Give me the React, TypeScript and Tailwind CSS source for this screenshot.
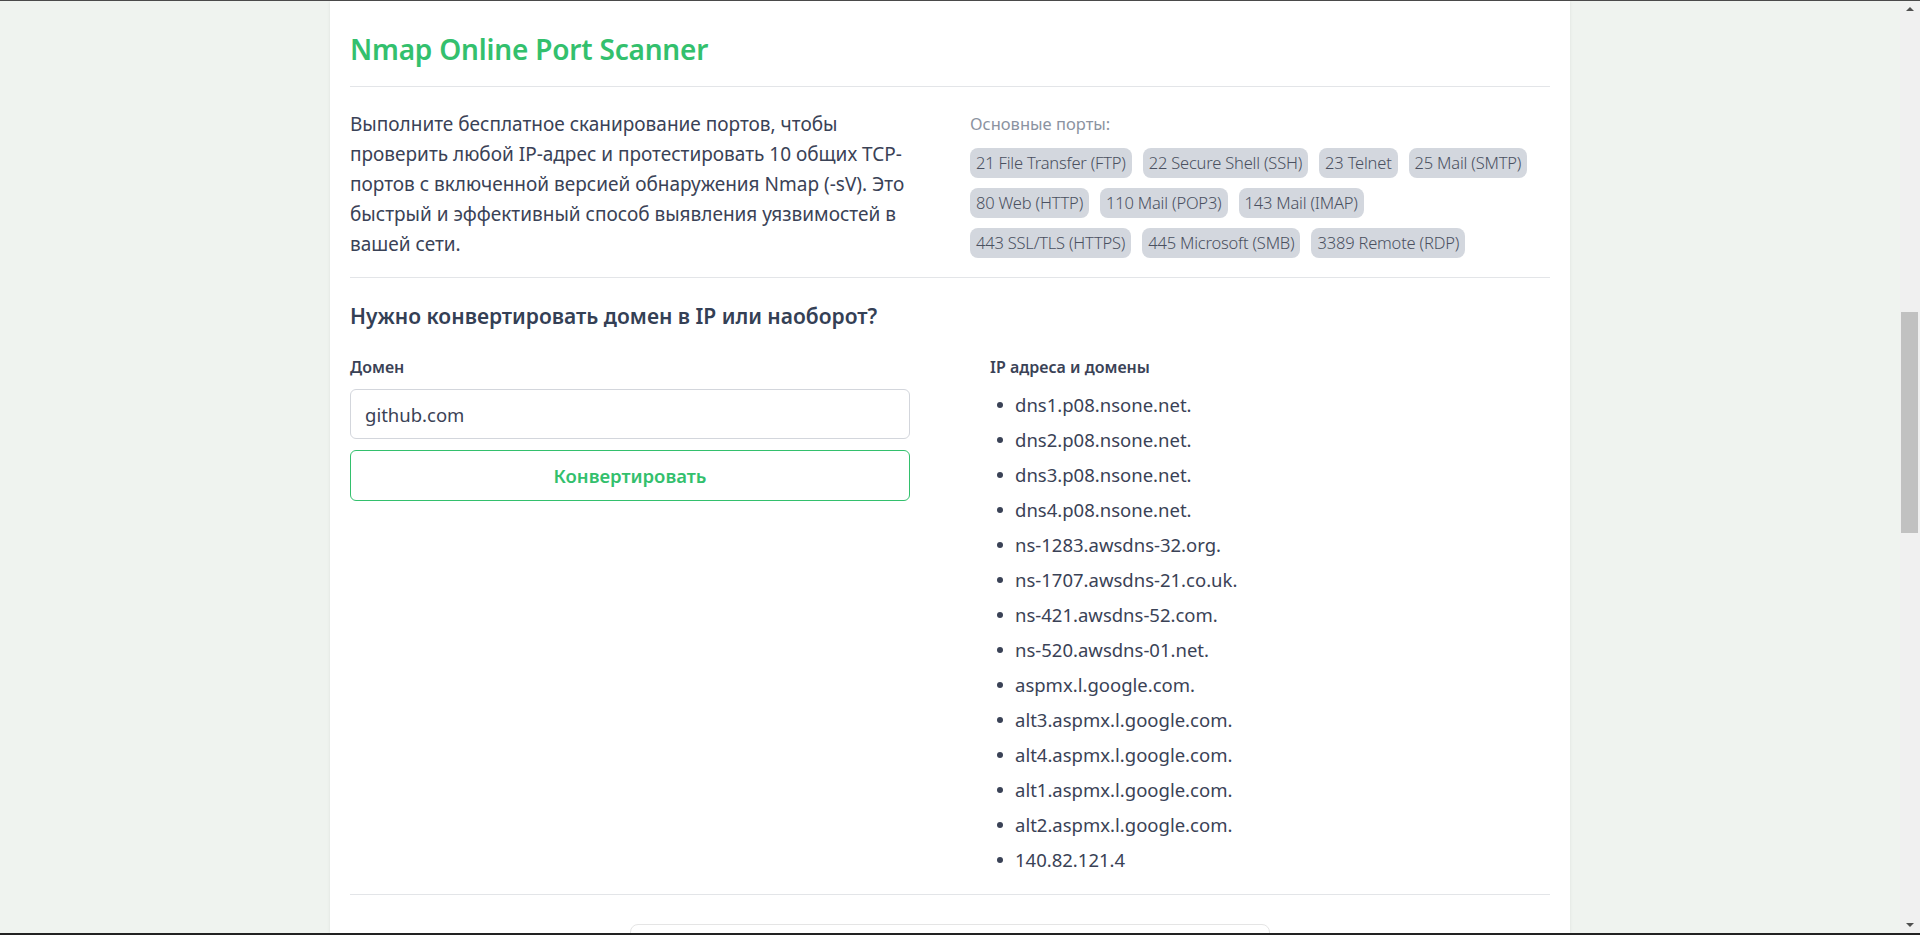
import React from "react";

const PORTS = [
  "21 File Transfer (FTP)",
  "22 Secure Shell (SSH)",
  "23 Telnet",
  "25 Mail (SMTP)",
  "80 Web (HTTP)",
  "110 Mail (POP3)",
  "143 Mail (IMAP)",
  "443 SSL/TLS (HTTPS)",
  "445 Microsoft (SMB)",
  "3389 Remote (RDP)",
];

const RECORDS = [
  "dns1.p08.nsone.net.",
  "dns2.p08.nsone.net.",
  "dns3.p08.nsone.net.",
  "dns4.p08.nsone.net.",
  "ns-1283.awsdns-32.org.",
  "ns-1707.awsdns-21.co.uk.",
  "ns-421.awsdns-52.com.",
  "ns-520.awsdns-01.net.",
  "aspmx.l.google.com.",
  "alt3.aspmx.l.google.com.",
  "alt4.aspmx.l.google.com.",
  "alt1.aspmx.l.google.com.",
  "alt2.aspmx.l.google.com.",
  "140.82.121.4",
];

/* ─── Fake window scrollbar ─── */
function Scrollbar() {
  return (
    <div className="w-[20px] shrink-0 bg-[#f0f0f0] flex flex-col items-stretch pl-[1px] pr-[2px]">
      <div className="h-[16px] flex items-center justify-center">
        <div className="w-0 h-0 border-l-[4px] border-r-[4px] border-b-[4px] border-l-transparent border-r-transparent border-b-[#505050]" />
      </div>
      <div className="h-[295px]" />
      <div className="h-[221px] bg-[#c1c1c1]" />
      <div className="flex-1" />
      <div className="h-[16px] flex items-center justify-center">
        <div className="w-0 h-0 border-l-[4px] border-r-[4px] border-t-[4px] border-l-transparent border-r-transparent border-t-[#505050]" />
      </div>
    </div>
  );
}

export default function App() {
  return (
    <div
      className="h-[935px] overflow-hidden flex bg-[#eff3ef] border-t border-[#4a4a4a] border-b-2 border-b-[#222]"
      style={{ fontFamily: '"Noto Sans", "Open Sans", sans-serif' }}
    >
      <div className="flex-1 flex justify-center overflow-hidden">
        <main className="w-[1240px] shrink-0 bg-white shadow-[0_0_3px_rgba(0,0,0,0.08)] px-5 pt-[31px] text-[#3a4256]">
          {/* Title */}
          <h1 className="text-[28px] leading-[34px] font-semibold text-[#33c06d] tracking-[-0.2px] pb-[20px] border-b border-[#e3e5e8]">
            Nmap Online Port Scanner
          </h1>

          {/* Intro + ports */}
          <section className="flex pt-[22px] pb-[18px] border-b border-[#e3e5e8]">
            <p className="w-[580px] text-[19px] leading-[30px]">
              Выполните бесплатное сканирование портов, чтобы проверить любой IP-адрес и протестировать 10 общих TCP-портов с включенной версией обнаружения Nmap (-sV). Это быстрый и эффективный способ выявления уязвимостей в вашей сети.
            </p>
            <div className="ml-[40px] flex-1">
              <p className="text-[16.5px] leading-[30px] text-[#8b93a1]">Основные порты:</p>
              <div className="mt-[9px] flex flex-wrap gap-x-[11px] gap-y-[10px] w-[560px]">
                {PORTS.map((p) => (
                  <span
                    key={p}
                    className="h-[30px] px-[6px] rounded-lg bg-[#d3d7de] text-[#4a5060] text-[16.5px] font-light leading-[30px] tracking-[-0.2px]"
                  >
                    {p}
                  </span>
                ))}
              </div>
            </div>
          </section>

          {/* Domain converter */}
          <section className="pt-[24px] pb-[17px] border-b border-[#e3e5e8]">
            <h2 className="text-[21px] leading-[28px] font-semibold text-[#344055]">
              Нужно конвертировать домен в IP или наоборот?
            </h2>
            <div className="flex mt-[26px]">
              <div className="w-[560px]">
                <label className="block text-[16px] leading-[22px] font-semibold text-[#3a4256]">
                  Домен
                </label>
                <input
                  defaultValue="github.com"
                  className="mt-[11px] w-full h-[50px] px-[14px] rounded-md border border-[#d3d6dc] text-[18.5px] text-[#3a4256] outline-none"
                  style={{ fontFamily: "inherit" }}
                />
                <button
                  className="mt-[11px] w-full h-[51px] rounded-md border border-[#33c06d] text-[#33c06d] text-[18.5px] font-semibold bg-white"
                  style={{ fontFamily: "inherit" }}
                >
                  Конвертировать
                </button>
              </div>
              <div className="ml-[80px] flex-1">
                <p className="text-[16px] leading-[22px] font-semibold text-[#3a4256]">
                  IP адреса и домены
                </p>
                <ul className="mt-[9px]">
                  {RECORDS.map((r) => (
                    <li key={r} className="flex items-center h-[35px] pl-[7px] gap-[12px] text-[18.5px]">
                      <span className="w-[6px] h-[6px] rounded-full bg-[#3a4256] shrink-0" />
                      {r}
                    </li>
                  ))}
                </ul>
              </div>
            </div>
          </section>

          {/* Next card (cut off) */}
          <div className="mt-[29px] mx-auto w-[640px] h-[120px] rounded-lg border border-[#e5e5e5]" />
        </main>
      </div>
      <Scrollbar />
    </div>
  );
}
